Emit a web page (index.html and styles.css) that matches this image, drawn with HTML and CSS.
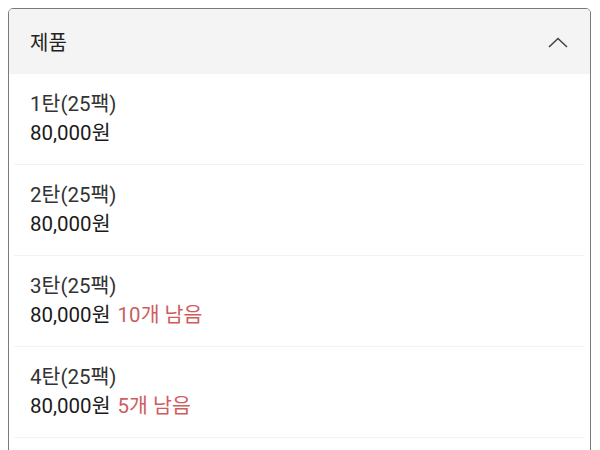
FILE: index.html
```html
<!DOCTYPE html>
<html lang="ko">
<head>
<meta charset="utf-8">
<link rel="stylesheet" href="styles.css">
</head>
<body>
<div class="panel">
  <div class="panel-header">
    <span class="panel-title">제품</span>
    <svg class="chevron" width="20" height="11" viewBox="0 0 20 11"><path d="M1 10 L10 1.5 L19 10" fill="none" stroke="#444" stroke-width="1.6"/></svg>
  </div>
  <ul class="items">
    <li class="item"><div class="name">1탄(25팩)</div><div class="price">80,000원</div></li>
    <li class="item"><div class="name">2탄(25팩)</div><div class="price">80,000원</div></li>
    <li class="item"><div class="name">3탄(25팩)</div><div class="price">80,000원 <span class="stock">10개 남음</span></div></li>
    <li class="item"><div class="name">4탄(25팩)</div><div class="price">80,000원 <span class="stock">5개 남음</span></div></li>
    <li class="item item-empty"></li>
  </ul>
</div>
</body>
</html>
```
FILE: styles.css
```css
html, body { margin: 0; padding: 0; background: #fff; }
body {
  padding: 8px;
  font-family: Roboto, "Noto Sans CJK KR", sans-serif;
  color: #222;
}
.panel {
  border: 1.5px solid #7a7a7a;
  border-radius: 5px;
  overflow: hidden;
  width: 581px;
}
.panel-header {
  background: #f4f4f4;
  height: 65px;
  display: flex;
  align-items: center;
  justify-content: space-between;
  padding: 0 22px 0 21px;
}
.panel-title { font-size: 20px; color: #222; }
.chevron { display: block; margin-top: 1px; }
.items { list-style: none; margin: 0; padding: 0; }
.item {
  margin: 0 5px;
  padding: 16px;
  border-bottom: 1px solid #f3f3f3;
  font-size: 20.5px;
  line-height: 29px;
}
.item-empty { height: 58px; }
.name { color: #333; }
.price { color: #1a1a1a; }
.stock { color: #cf5c5f; margin-left: 2px; }
```
